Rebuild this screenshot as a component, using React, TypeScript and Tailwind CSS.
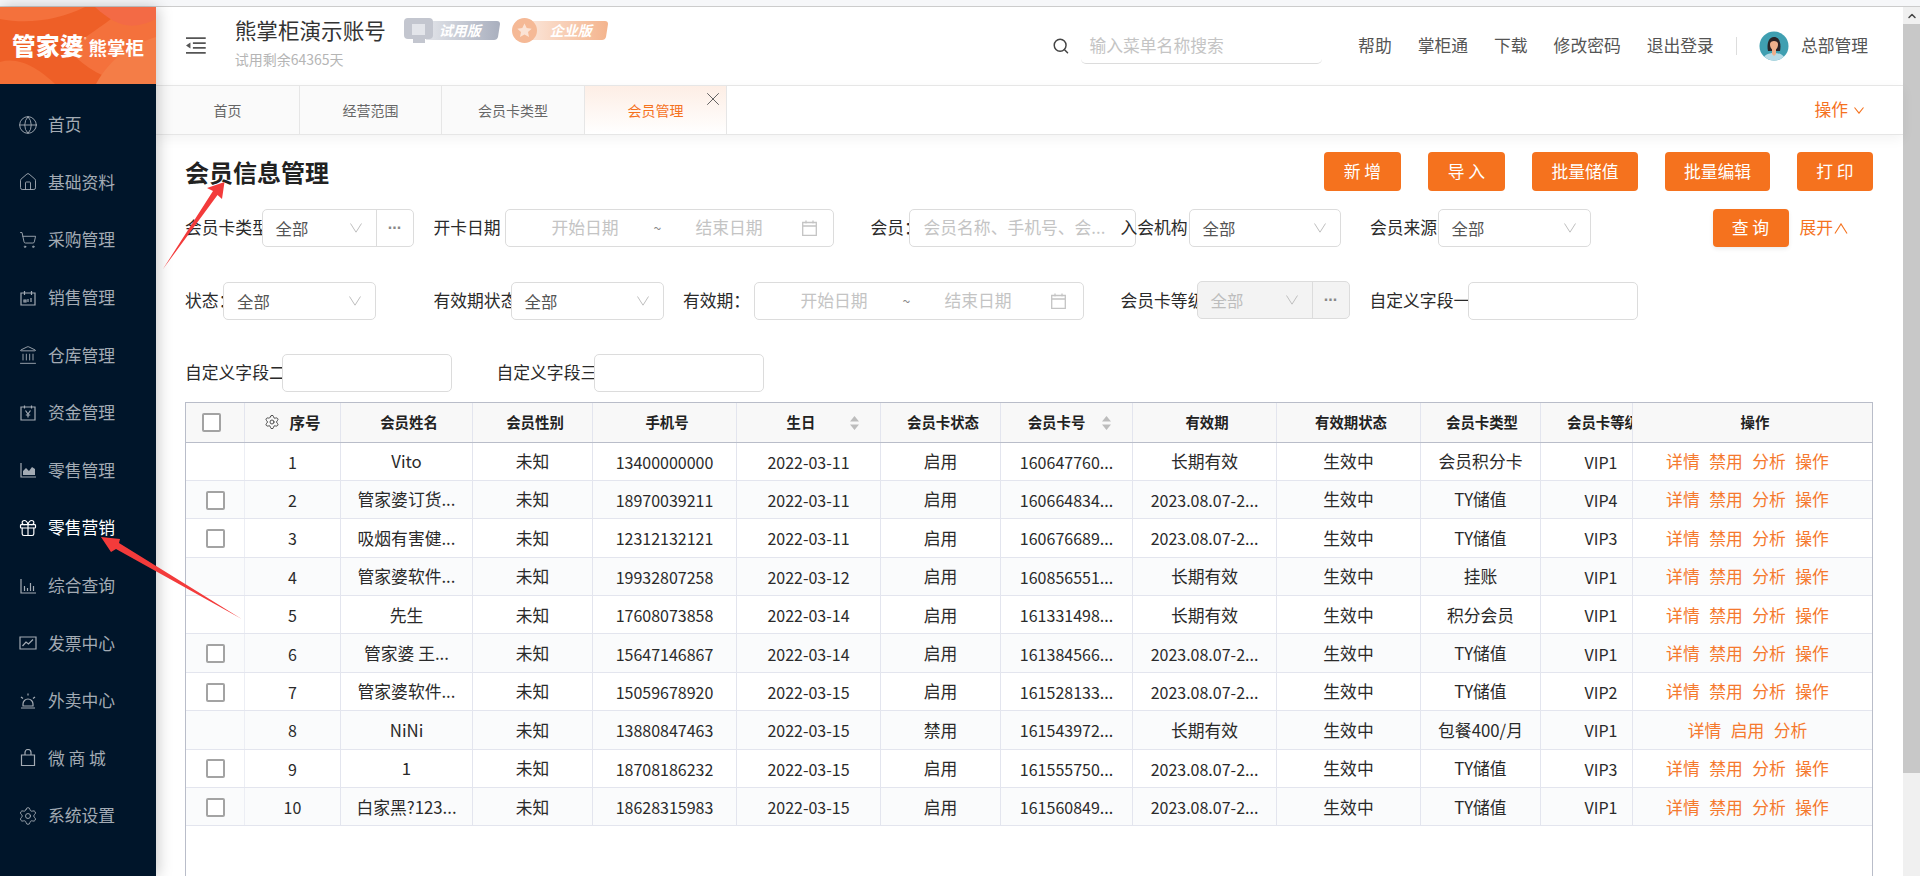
import React from 'react';
import { ChevronUp, Gift, Globe, House, Landmark, Search, Settings, ShoppingCart, X } from 'lucide-react';

const BoxChart = ({ children }: { children: React.ReactNode }) => (
  <svg width="18" height="18" viewBox="0 0 18 18" fill="none" stroke="currentColor" strokeWidth="1.2">
    {children}
  </svg>
);

const menu: { label: string; icon: React.ReactNode; active?: boolean }[] = [
  { label: '首页', icon: <Globe size={20} strokeWidth={1.1} /> },
  { label: '基础资料', icon: <House size={20} strokeWidth={1.1} /> },
  { label: '采购管理', icon: <ShoppingCart size={18} strokeWidth={1.2} /> },
  {
    label: '销售管理',
    icon: (
      <BoxChart>
        <path d="M2 4h14v12H2zM5.5 2v4M12.5 2v4M5 11h2v2H5zM9 10v3M12 9v4" />
      </BoxChart>
    ),
  },
  { label: '仓库管理', icon: <Landmark size={20} strokeWidth={1.1} /> },
  {
    label: '资金管理',
    icon: (
      <BoxChart>
        <path d="M2 3h14v13H2zM5.5 1.5v3M12.5 1.5v3M6.5 6.5 9 10l2.5-3.5M9 10v3.5M6.8 11h4.4" />
      </BoxChart>
    ),
  },
  {
    label: '零售管理',
    icon: (
      <BoxChart>
        <path d="M2 2v14h15" />
        <path d="M4 14v-4l3-3 3 3 3-4 3 2v6z" fill="currentColor" stroke="none" />
      </BoxChart>
    ),
  },
  { label: '零售营销', icon: <Gift size={20} strokeWidth={1.4} />, active: true },
  {
    label: '综合查询',
    icon: (
      <BoxChart>
        <path d="M2 2v14h15M5.5 9v5M8.5 11v3M11.5 6v8M14.5 9v5" />
      </BoxChart>
    ),
  },
  {
    label: '发票中心',
    icon: (
      <BoxChart>
        <path d="M1 3h16v12H1zM3.5 12 7 8l2.5 2 4.5-4.5" />
      </BoxChart>
    ),
  },
  {
    label: '外卖中心',
    icon: (
      <BoxChart>
        <path d="M4 12a5 5 0 0 1 10 0v2H4zM2 16h14M2 5l2 1.5M16 5l-2 1.5M9 1.5v2" />
      </BoxChart>
    ),
  },
  {
    label: '微 商 城',
    icon: (
      <BoxChart>
        <path d="M2.5 6h13v10.5h-13zM6 6V3.5a3 3 0 0 1 6 0V6" />
      </BoxChart>
    ),
  },
  { label: '系统设置', icon: <Settings size={20} strokeWidth={1.1} /> },
];

const long = '2023.08.07-2...';
const rows = [
  { no: 1, name: 'Vito', phone: '13400000000', birth: '2022-03-11', card: '160647760...', term: '长期有效', type: '会员积分卡', level: 'VIP1', check: false },
  { no: 2, name: '管家婆订货...', phone: '18970039211', birth: '2022-03-11', card: '160664834...', term: long, type: 'TY储值', level: 'VIP4', check: true },
  { no: 3, name: '吸烟有害健...', phone: '12312132121', birth: '2022-03-11', card: '160676689...', term: long, type: 'TY储值', level: 'VIP3', check: true },
  { no: 4, name: '管家婆软件...', phone: '19932807258', birth: '2022-03-12', card: '160856551...', term: '长期有效', type: '挂账', level: 'VIP1', check: false },
  { no: 5, name: '先生', phone: '17608073858', birth: '2022-03-14', card: '161331498...', term: '长期有效', type: '积分会员', level: 'VIP1', check: false },
  { no: 6, name: '管家婆 王...', phone: '15647146867', birth: '2022-03-14', card: '161384566...', term: long, type: 'TY储值', level: 'VIP1', check: true },
  { no: 7, name: '管家婆软件...', phone: '15059678920', birth: '2022-03-15', card: '161528133...', term: long, type: 'TY储值', level: 'VIP2', check: true },
  { no: 8, name: 'NiNi', phone: '13880847463', birth: '2022-03-15', card: '161543972...', term: '长期有效', type: '包餐400/月', level: 'VIP1', check: false, off: true },
  { no: 9, name: '1', phone: '18708186232', birth: '2022-03-15', card: '161555750...', term: long, type: 'TY储值', level: 'VIP3', check: true },
  { no: 10, name: '白家黑?123...', phone: '18628315983', birth: '2022-03-15', card: '161560849...', term: long, type: 'TY储值', level: 'VIP1', check: true },
];

const gridCols = 'grid grid-cols-[59px_96px_132px_120px_144px_144px_120px_132px_144px_144px_120px_92px_239px]';

const Label = ({ text, className }: { text: string; className: string }) => (
  <div className={`shrink-0 overflow-hidden whitespace-nowrap text-[16.8px] text-[#2a2a2a] ${className}`}>{text}</div>
);

const Chevron = ({ up, className }: { up?: boolean; className?: string }) => (
  <svg className={className} width="12" height="10" viewBox="0 0 12 10" fill="none" stroke="currentColor" strokeWidth="1">
    <path d={up ? 'M.5 9.5 6 .8l5.5 8.7' : 'M.5.5 6 9.2 11.5.5'} />
  </svg>
);

const Select = ({ className, dots, disabled }: { className: string; dots?: boolean; disabled?: boolean }) => (
  <div
    className={`relative z-10 flex h-[38px] shrink-0 items-center rounded-[5px] border border-[#dcdcdc] text-[16.4px] ${disabled ? 'bg-[#f3f3f3] text-[#bdbdbd]' : 'bg-white text-[#555]'} ${className}`}
  >
    <span className="pl-[13px]">全部</span>
    <Chevron className="mr-[14px] ml-auto text-[#bfbfbf]" />
    {dots && (
      <span className="flex h-full w-[37px] shrink-0 items-center justify-center border-l border-[#dcdcdc] pb-[9px] font-['Liberation_Sans',sans-serif] text-[16px] font-bold text-[#888]">
        ...
      </span>
    )}
  </div>
);

const CalendarIcon = () => (
  <svg width="15" height="16" viewBox="0 0 15 16" fill="none" stroke="#c4c4c4" strokeWidth="1.3">
    <path d="M.7 2.5h13.6v12.8H.7zM.7 6h13.6M4 .5v3M11 .5v3" />
  </svg>
);

const DateRange = ({ className }: { className: string }) => (
  <div className={`flex h-[38px] shrink-0 items-center rounded-[5px] border border-[#dcdcdc] bg-white pl-[46px] text-[16.8px] text-[#c4c4c4] ${className}`}>
    <span className="w-[68px] whitespace-nowrap">开始日期</span>
    <span className="w-[76px] text-center text-[14px] text-[#888]">~</span>
    <span className="w-[68px] whitespace-nowrap">结束日期</span>
    <span className="ml-[38px]">
      <CalendarIcon />
    </span>
  </div>
);

const Input = ({ className, placeholder }: { className: string; placeholder?: string }) => (
  <div className={`flex h-[38px] shrink-0 items-center overflow-hidden rounded-[5px] border border-[#dcdcdc] bg-white pl-[14px] text-[16.8px] whitespace-nowrap text-[#c4c4c4] ${className}`}>
    {placeholder}
  </div>
);

const OrangeButton = ({ text, className }: { text: string; className: string }) => (
  <button className={`flex shrink-0 items-center justify-center rounded-[4px] bg-[#f5721e] text-[16.8px] whitespace-pre text-white ${className}`}>{text}</button>
);

const Checkbox = ({ className }: { className?: string }) => (
  <div className={`h-[19px] w-[19px] rounded-[2px] border-2 border-[#a3a3a3] bg-white ${className ?? ''}`} />
);

const SortCaret = () => (
  <svg className="absolute top-[13px] right-[20px]" width="11" height="14" viewBox="0 0 11 14" fill="#bdbdbd">
    <path d="M5.5 0 10 5.5H1zM5.5 14 1 8.5h9z" />
  </svg>
);

const headCell = 'relative flex items-center justify-center overflow-hidden border-r border-[#e3e5ee] text-[14.4px] font-bold whitespace-nowrap text-[#222]';
const bodyCell = 'flex items-center justify-center overflow-hidden border-r border-[#e3e5ee] pt-[1px] text-[16.8px] whitespace-nowrap text-[#2a2a2a]';

const Avatar = () => (
  <svg width="30" height="30" viewBox="0 0 30 30">
    <defs>
      <clipPath id="avatar-clip">
        <circle cx="15" cy="15" r="14.5" />
      </clipPath>
    </defs>
    <g clipPath="url(#avatar-clip)">
      <rect width="30" height="30" fill="#3f9fb1" />
      <path d="M4 30c0-6 5-8 11-8s11 2 11 8z" fill="#b5dbe6" />
      <path d="M9 20c-1-4-1-14 6-14s7 10 6 14z" fill="#2a2326" />
      <path d="M11 13c0-2 2-3 4-3s4 1 4 3c0 4-2 6-4 6s-4-2-4-6z" fill="#eeb08c" />
      <path d="M13 18h4v5l-2 2-2-2z" fill="#eeb08c" />
    </g>
  </svg>
);

const Logo = () => (
  <div className="relative flex h-[77px] shrink-0 items-center overflow-hidden bg-[#f26a35] pl-[12px] text-white">
    <svg className="absolute inset-0" width="156" height="77" viewBox="0 0 156 77">
      <path d="M0 0h156v77H0z" fill="#f4713c" />
      <path d="M0 12C30 18 60 12 85 0h40C105 20 80 30 70 45c15 15 35 28 60 32H0z" fill="#ee5f27" />
      <path d="M95 0h61v12C130 25 115 18 95 0z" fill="#f36a45" />
      <path d="M0 55c20-6 40 8 55 22H0z" fill="#f36f36" />
      <path d="M156 30c-25 8-45 20-60 47h60z" fill="#f47d47" />
    </svg>
    <span className="relative text-[23.5px] leading-none font-black tracking-[0.5px]">管家婆</span>
    <span className="relative mb-[14px] text-[5px] leading-none">®</span>
    <span className="relative mt-[3px] ml-[2px] text-[18.5px] leading-none font-bold">熊掌柜</span>
  </div>
);

const TrialBadge = () => (
  <div className="relative h-[25px] w-[96px] shrink-0">
    <svg className="absolute inset-0" width="96" height="25" viewBox="0 0 96 25">
      <defs>
        <linearGradient id="trial-bar" x1="0" x2="1" y1="0" y2="0">
          <stop offset="0" stopColor="#e2e4e9" />
          <stop offset="1" stopColor="#a9afbe" />
        </linearGradient>
      </defs>
      <path d="M22 3h71q3 0 3 3l-2 13q-1 3-4 3H22z" fill="url(#trial-bar)" />
      <rect x="0" y="0" width="29" height="21" rx="4" fill="#c3c6cf" />
      <rect x="8" y="6" width="13" height="11" fill="#e3e5ea" />
      <rect x="9" y="21" width="12" height="4" fill="#c3c6cf" />
    </svg>
    <span className="absolute top-[2px] left-[35px] text-[14px] font-bold text-white italic">试用版</span>
  </div>
);

const EnterpriseBadge = () => (
  <div className="relative h-[25px] w-[96px] shrink-0">
    <svg className="absolute inset-0" width="96" height="25" viewBox="0 0 96 25">
      <defs>
        <linearGradient id="ent-bar" x1="0" x2="1" y1="0" y2="0">
          <stop offset="0" stopColor="#fbe6da" />
          <stop offset="1" stopColor="#f4b48d" />
        </linearGradient>
      </defs>
      <path d="M15 3h78q3 0 3 3l-2 13q-1 3-4 3H15z" fill="url(#ent-bar)" />
      <circle cx="12.5" cy="12.5" r="12.5" fill="#f5b996" />
      <path d="M12.5 5.5l2.2 4.6 5 .6-3.7 3.4 1 5-4.5-2.5-4.5 2.5 1-5-3.7-3.4 5-.6z" fill="#fbe3d5" />
    </svg>
    <span className="absolute top-[2px] left-[38px] text-[14px] font-bold text-white italic">企业版</span>
  </div>
);

const App = () => {
  return (
    <div className="relative flex h-[876px] w-[1920px] flex-col overflow-hidden bg-white font-['Noto_Sans_CJK_SC','Microsoft_YaHei',sans-serif]">
      <div className="h-[7px] shrink-0 border-b border-[#cccccc] bg-[#f6f7f9]" />

      <div className="flex min-h-0 flex-1">
        <aside className="relative z-20 flex w-[156px] shrink-0 flex-col bg-[#00152a] shadow-[2px_0_14px_rgba(0,0,0,0.22)]">
          <Logo />
          <nav className="pt-[12px]">
            {menu.map((m) => (
              <div key={m.label} className={`flex h-[57.6px] items-center text-[16.8px] whitespace-pre ${m.active ? 'text-white' : 'text-[#a3abb4]'}`}>
                <span className="flex w-[48px] justify-center pr-[7px] pl-[14px]">{m.icon}</span>
                {m.label}
              </div>
            ))}
          </nav>
        </aside>

        <main className="flex min-w-0 flex-1 flex-col">
          {/* top bar */}
          <header className="flex h-[78px] shrink-0 items-center pr-[35px] pl-[30px]">
            <svg width="20" height="20" viewBox="0 0 20 20" fill="none" stroke="#555" strokeWidth="1.8">
              <path d="M0 2h20M7 7h13M7 12h13M0 17h20" />
              <path d="M4.5 6.5v6L0 9.5z" fill="#555" stroke="none" />
            </svg>
            <div className="mb-[8px] ml-[29px] w-[169px] shrink-0">
              <div className="text-[21.6px] leading-[30px] whitespace-nowrap text-[#333]">熊掌柜演示账号</div>
              <div className="mt-[4px] text-[14px] leading-[20px] text-[#b5b5b5]">试用剩余64365天</div>
            </div>
            <div className="mb-[31px] flex gap-[12px]">
              <TrialBadge />
              <EnterpriseBadge />
            </div>
            <Search size={18} strokeWidth={2} className="ml-[444px] text-[#444]" />
            <div className="ml-[12px] flex h-[35px] w-[244px] items-center rounded-br-[5px] rounded-bl-[5px] border-b border-[#dcdcdc] pl-[8px] text-[16.8px] text-[#c4c4c4]">输入菜单名称搜索</div>
            <div className="ml-[36px] flex items-center gap-[26px] text-[16.8px] whitespace-nowrap text-[#555]">
              <span>帮助</span>
              <span>掌柜通</span>
              <span>下载</span>
              <span>修改密码</span>
              <span>退出登录</span>
            </div>
            <div className="ml-[22px] h-[18px] w-px bg-[#dddddd]" />
            <div className="ml-[22px]">
              <Avatar />
            </div>
            <span className="ml-[12px] text-[16.8px] whitespace-nowrap text-[#555]">总部管理</span>
          </header>

          {/* tabs */}
          <div className="relative z-10 flex h-[50px] shrink-0 border-y border-[#e6e6e6] bg-white shadow-[0_4px_12px_rgba(0,0,0,0.05)]">
            {[
              ['首页', 'w-[144px]'],
              ['经营范围', 'w-[142px]'],
              ['会员卡类型', 'w-[143px]'],
            ].map(([t, w]) => (
              <div key={t} className={`flex items-center justify-center border-r border-[#e6e6e6] bg-[#fafafa] text-[14px] text-[#666] ${w}`}>
                {t}
              </div>
            ))}
            <div className="relative flex w-[142px] items-center justify-center border-r border-[#e6e6e6] bg-gradient-to-b from-[#fdeee5] to-white text-[14px] text-[#f5721e]">
              会员管理
              <X size={22} strokeWidth={1} className="absolute top-[2px] right-[2px] text-[#555]" />
            </div>
            <div className="ml-auto flex items-center pr-[39px] pl-[1px] text-[16.8px] text-[#f5721e]">
              操作
              <svg className="ml-[6px]" width="10" height="7" viewBox="0 0 10 7" fill="none" stroke="currentColor" strokeWidth="1.1">
                <path d="M.5.5 5 6.2 9.5.5" />
              </svg>
            </div>
          </div>

          {/* content */}
          <div className="flex min-h-0 flex-1 flex-col pt-[17px] pr-[30px] pl-[29px]">
            <div className="flex h-[39px] shrink-0 items-center">
              <h1 className="text-[24px] font-bold text-[#222]">会员信息管理</h1>
              <div className="ml-auto flex gap-[27px]">
                <OrangeButton text="新 增" className="h-[39px] w-[77px]" />
                <OrangeButton text="导 入" className="h-[39px] w-[77px]" />
                <OrangeButton text="批量储值" className="h-[39px] w-[106px]" />
                <OrangeButton text="批量编辑" className="h-[39px] w-[105px]" />
                <OrangeButton text="打 印" className="h-[39px] w-[76px]" />
              </div>
            </div>

            <div className="mt-[18px] flex h-[38px] shrink-0 items-center">
              <Label text="会员卡类型" className="w-[76.5px]" />
              <Select className="w-[152px]" dots />
              <Label text="开卡日期" className="ml-[20px] w-[71px]" />
              <DateRange className="w-[329px]" />
              <Label text="会员：" className="ml-[37px] w-[38px]" />
              <Input className="w-[227px]" placeholder="会员名称、手机号、会..." />
              <Label text="入会机构" className="relative z-20 -ml-[15px] w-[68px]" />
              <Select className="w-[152px]" />
              <Label text="会员来源" className="ml-[29.5px] w-[67.5px]" />
              <Select className="w-[153px]" />
              <OrangeButton text="查 询" className="ml-[122px] h-[38px] w-[76px] shadow-[0_2px_4px_rgba(0,0,0,0.08)]" />
              <span className="ml-[11px] flex items-center text-[16.8px] text-[#f5721e]">
                展开
                <Chevron up className="ml-[1px] h-[11px] w-[14px]" />
              </span>
            </div>

            <div className="mt-[35px] flex h-[38px] shrink-0 items-center">
              <Label text="状态：" className="w-[38px]" />
              <Select className="w-[152.5px]" />
              <Label text="有效期状态" className="ml-[58px] w-[77px]" />
              <Select className="w-[153.5px]" />
              <Label text="有效期：" className="ml-[19px] w-[70.5px]" />
              <DateRange className="w-[330px]" />
              <Label text="会员卡等级" className="ml-[37px] w-[76px]" />
              <Select className="-mt-[2px] w-[153px]" dots disabled />
              <Label text="自定义字段一" className="ml-[20px] w-[98.5px]" />
              <Input className="w-[169.5px]" />
            </div>

            <div className="mt-[34px] flex h-[38px] shrink-0 items-center">
              <Label text="自定义字段二" className="w-[96.5px]" />
              <Input className="w-[170px]" />
              <Label text="自定义字段三" className="ml-[45px] w-[97px]" />
              <Input className="w-[170px]" />
            </div>

            {/* member table */}
            <div className="mt-[10px] min-h-0 flex-1 border-x border-t border-[#b9bdc9]">
              <div className={`${gridCols} h-[39.5px] border-b border-[#b9bdc9] bg-[#f8f8f8]`}>
                <div className={headCell}>
                  <Checkbox className="mr-[7px]" />
                </div>
                <div className={`${headCell} gap-[9px] border-[#b9bdc9] text-[15.5px]`}>
                  <Settings size={16} strokeWidth={1.4} className="text-[#444]" />
                  序号
                </div>
                <div className={`${headCell} pl-[5px]`}>会员姓名</div>
                <div className={`${headCell} pl-[5px]`}>会员性别</div>
                <div className={`${headCell} pl-[5px]`}>手机号</div>
                <div className={`${headCell} pr-[15px]`}>
                  生日
                  <SortCaret />
                </div>
                <div className={`${headCell} pl-[5px]`}>会员卡状态</div>
                <div className={`${headCell} pr-[20px]`}>
                  会员卡号
                  <SortCaret />
                </div>
                <div className={`${headCell} pl-[5px]`}>有效期</div>
                <div className={`${headCell} pl-[5px]`}>有效期状态</div>
                <div className={`${headCell} pl-[3px]`}>会员卡类型</div>
                <div className={`${headCell} justify-start border-[#b9bdc9] pl-[2px]`}>
                  <span className="w-[120px] shrink-0 text-center">会员卡等级</span>
                </div>
                <div className={`${headCell} border-r-0 pl-[5px]`}>操作</div>
              </div>

              {rows.map((r) => (
                <div key={r.no} className={`${gridCols} h-[38.4px] border-b border-[#e3e5ee] ${r.no % 2 === 0 ? 'bg-[#fafbfc]' : 'bg-white'}`}>
                  <div className={`${bodyCell} border-[#eceef4]`}>{r.check && <Checkbox />}</div>
                  <div className={`${bodyCell} border-[#b9bdc9] text-[16px]`}>{r.no}</div>
                  <div className={bodyCell}>{r.name}</div>
                  <div className={bodyCell}>未知</div>
                  <div className={`${bodyCell} text-[16px]`}>{r.phone}</div>
                  <div className={`${bodyCell} text-[16px]`}>{r.birth}</div>
                  <div className={bodyCell}>{r.off ? '禁用' : '启用'}</div>
                  <div className={`${bodyCell} text-[16px]`}>{r.card}</div>
                  <div className={bodyCell}>{r.term === long ? <span className="text-[16px]">{r.term}</span> : r.term}</div>
                  <div className={bodyCell}>生效中</div>
                  <div className={bodyCell}>{r.type}</div>
                  <div className={`${bodyCell} justify-start border-[#b9bdc9] text-[16px]`}>
                    <span className="w-[120px] shrink-0 text-center">{r.level}</span>
                  </div>
                  <div className={`${bodyCell} gap-[9.5px] border-r-0 pr-[10px] text-[#f5792e]`}>
                    <span>详情</span>
                    <span>{r.off ? '启用' : '禁用'}</span>
                    <span>分析</span>
                    {!r.off && <span>操作</span>}
                  </div>
                </div>
              ))}
            </div>
          </div>
        </main>

        {/* browser scrollbar */}
        <div className="flex w-[17px] shrink-0 flex-col bg-[#f0f0f0]">
          <div className="flex h-[17px] items-center justify-center">
            <ChevronUp size={12} strokeWidth={3} className="text-[#444]" />
          </div>
          <div className="h-[749px] bg-[#c8c8c8]" />
        </div>
      </div>

      {/* red annotation arrows */}
      <svg className="pointer-events-none absolute top-0 left-0 z-30" width="1920" height="876" viewBox="0 0 1920 876" fill="#f33b3b">
        <polygon points="224.5,182 222,199 217.5,195 163,269 213,191 207,188" />
        <polygon points="101,537 120,539 119,543 241.7,619 116,549 111,552" />
      </svg>
    </div>
  );
};

export default App;
